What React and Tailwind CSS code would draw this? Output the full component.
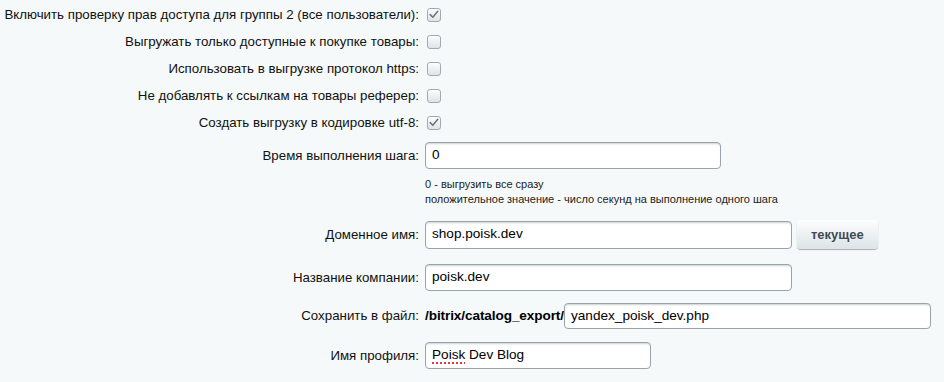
import React from 'react';

const font = { fontFamily: '"Liberation Sans", Arial, sans-serif' };

const Checkbox = ({ checked }) => (
  <span className="ml-[7px] flex h-[14px] w-[14px] items-center justify-center rounded-[3px] border border-[#a3a9ad] bg-gradient-to-b from-[#fdfdfd] to-[#dfe3e5] shadow-[inset_0_1px_0_#fff]">
    {checked && (
      <svg width="10" height="9" viewBox="0 0 10 9" fill="none">
        <path d="M1.2 4.6 L3.8 7.2 L8.8 1.3" stroke="#6b7378" strokeWidth="1.5" strokeLinecap="round" strokeLinejoin="round" />
      </svg>
    )}
  </span>
);

const Field = ({ width, height = 'h-[27px]', children }) => (
  <div
    className={`${width} ${height} flex items-center rounded-[4px] border border-[#9aa3ab] bg-white pl-[6px] text-[13.6px] text-black shadow-[inset_0_2px_2px_-1px_rgba(180,188,191,0.7)]`}
  >
    {children}
  </div>
);

const Label = ({ children }) => (
  <div className="w-[420px] shrink-0 pr-[1px] text-right text-[13.3px] text-[#111]">{children}</div>
);

const checks = [
  { label: 'Включить проверку прав доступа для группы 2 (все пользователи):', checked: true },
  { label: 'Выгружать только доступные к покупке товары:', checked: false },
  { label: 'Использовать в выгрузке протокол https:', checked: false },
  { label: 'Не добавлять к ссылкам на товары реферер:', checked: false },
  { label: 'Создать выгрузку в кодировке utf-8:', checked: true },
];

export default function App() {
  return (
    <div className="h-[382px] w-[944px] overflow-hidden bg-[#f5f9f9] pt-[1px]" style={font}>
      {checks.map((c) => (
        <div key={c.label} className="flex h-[27px] items-center">
          <Label>{c.label}</Label>
          <Checkbox checked={c.checked} />
        </div>
      ))}

      <div className="mt-[6px] flex items-center">
        <Label>Время выполнения шага:</Label>
        <div className="ml-[5px]">
          <Field width="w-[296px]">0</Field>
        </div>
      </div>

      <div className="ml-[425px] mt-[8px] text-[11px] leading-[15px] text-[#222]">
        <div>0 - выгрузить все сразу</div>
        <div>положительное значение - число секунд на выполнение одного шага</div>
      </div>

      <div className="mt-[13px] flex items-center">
        <Label>Доменное имя:</Label>
        <div className="ml-[5px] flex items-center gap-[5px]">
          <Field width="w-[367px]" height="h-[28px]">shop.poisk.dev</Field>
          <button className="h-[29px] rounded-[4px] bg-gradient-to-b from-[#fdfefe] to-[#dce4e7] px-[14px] text-[13px] font-bold text-[#3f4b54] shadow-[0_0_1px_rgba(0,0,0,0.11),0_1px_1px_rgba(0,0,0,0.3),inset_0_1px_#fff]">
            текущее
          </button>
        </div>
      </div>

      <div className="mt-[15px] flex items-center">
        <Label>Название компании:</Label>
        <div className="ml-[5px]">
          <Field width="w-[367px]">poisk.dev</Field>
        </div>
      </div>

      <div className="mt-[12px] flex items-center">
        <Label>Сохранить в файл:</Label>
        <div className="ml-[5px] flex items-center">
          <span className="w-[139px] whitespace-nowrap text-[13.6px] font-bold tracking-[-0.1px] text-black">/bitrix/catalog_export/</span>
          <Field width="w-[367px]" height="h-[26px]">yandex_poisk_dev.php</Field>
        </div>
      </div>

      <div className="mt-[13px] flex items-center">
        <Label>Имя профиля:</Label>
        <div className="ml-[5px]">
          <Field width="w-[226px]">
            <span className="underline decoration-[#e0393e] decoration-dotted decoration-[1.5px] underline-offset-[3px]">Poisk</span>
            <span>&nbsp;Dev Blog</span>
          </Field>
        </div>
      </div>
    </div>
  );
}
